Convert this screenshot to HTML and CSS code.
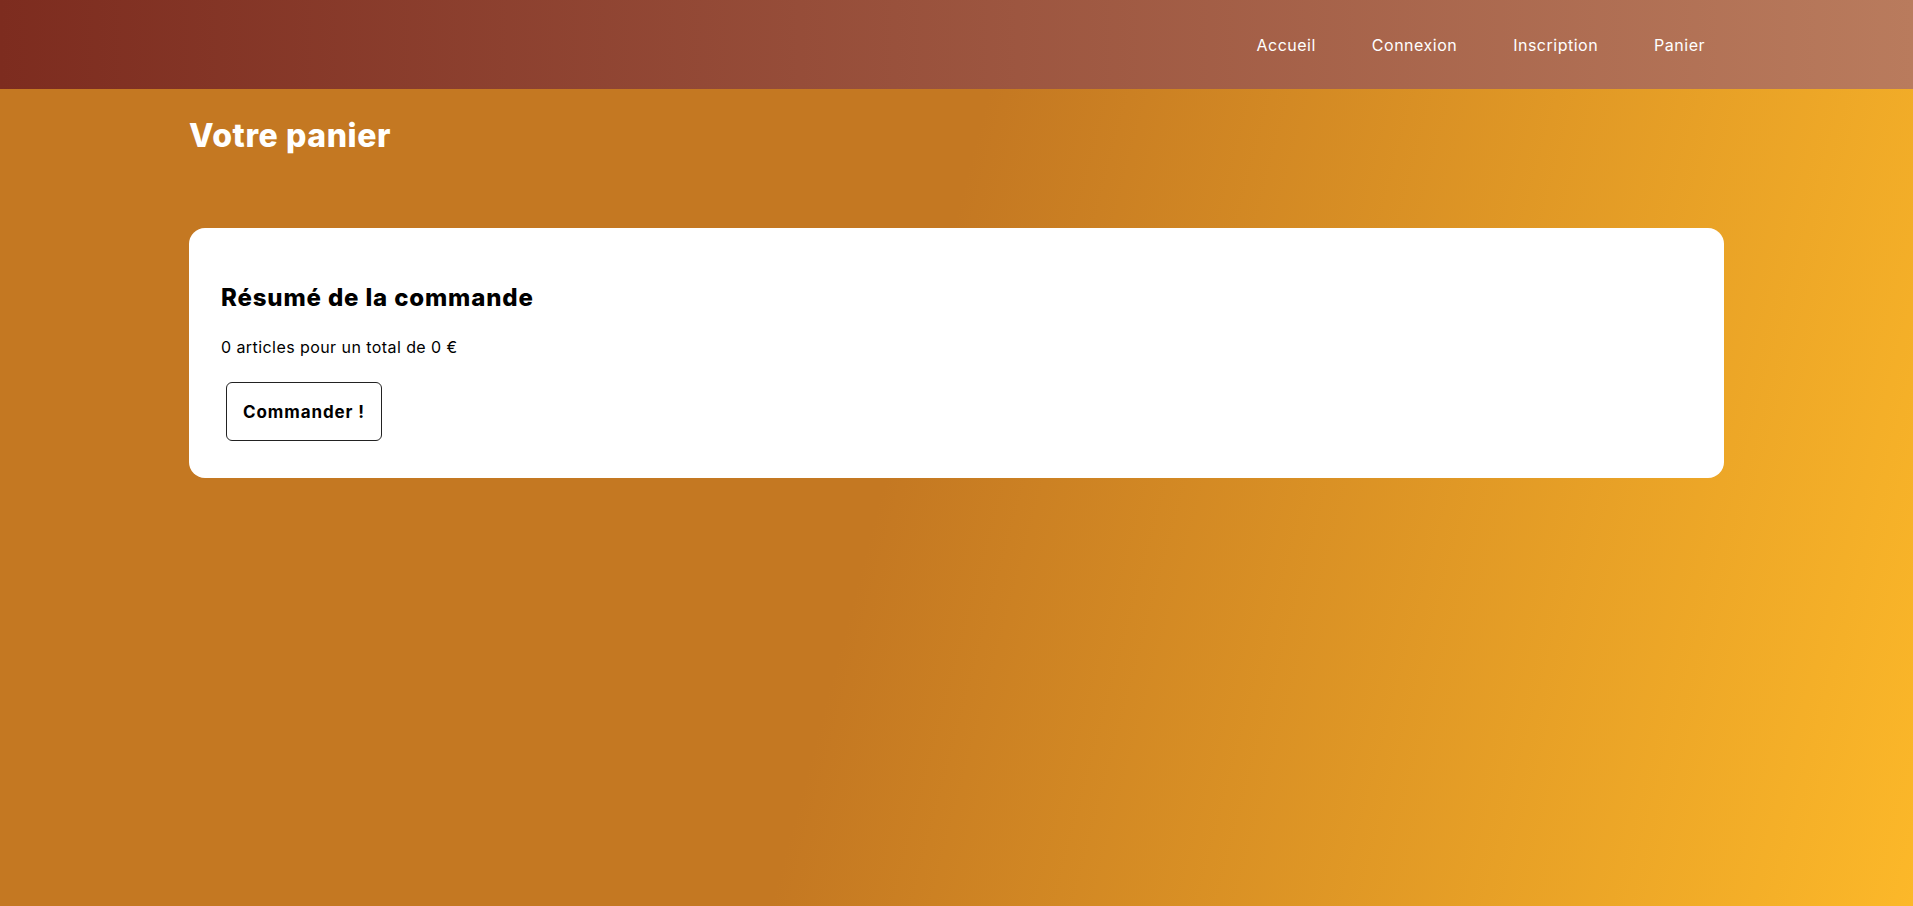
FILE: index.html
```html
<!DOCTYPE html>
<html lang="fr">
<head>
<meta charset="utf-8">
<title>Votre panier</title>
<link rel="stylesheet" href="styles.css">
</head>
<body>
<header class="topbar">
  <nav class="nav">
    <a class="nav-link" href="#">Accueil</a>
    <a class="nav-link" href="#">Connexion</a>
    <a class="nav-link" href="#">Inscription</a>
    <a class="nav-link" href="#">Panier</a>
  </nav>
</header>
<main class="page">
  <h1 class="page-title">Votre panier</h1>
  <section class="card">
    <h2 class="card-title">Résumé de la commande</h2>
    <p class="summary">0 articles pour un total de 0 €</p>
    <button class="order-btn" type="button">Commander !</button>
  </section>
</main>
</body>
</html>
```

FILE: styles.css
```css
html, body {
  margin: 0;
  padding: 0;
}

body {
  min-height: 906px;
  font-family: Inter, "DejaVu Sans", sans-serif;
  background: linear-gradient(105deg, #c47822 0%, #c47822 47%, #fcb829 100%);
  color: #000;
}

.topbar {
  height: 89px;
  background: linear-gradient(to right, #7d2c1f, #b97b5d);
  display: flex;
  align-items: center;
  justify-content: flex-end;
  padding-right: 180px;
}

.nav {
  display: flex;
  align-items: center;
}

.nav-link {
  color: #fff;
  text-decoration: none;
  font-size: 16px;
  line-height: 24px;
  letter-spacing: 0.5px;
  padding: 0 28px;
}

.page {
  width: 1535px;
  margin: 0 auto;
  display: flex;
  flex-direction: column;
}

.page-title {
  margin: 27px 0 0 0;
  font-size: 32px;
  line-height: 40px;
  font-weight: 800;
  letter-spacing: 0.6px;
  color: #fff;
}

.card {
  margin-top: 72px;
  background: #fff;
  border-radius: 16px;
  padding: 55px 32px 37px 32px;
  display: flex;
  flex-direction: column;
  align-items: flex-start;
}

.card-title {
  margin: 0;
  font-size: 24px;
  line-height: 30px;
  font-weight: 800;
  letter-spacing: 0.85px;
  color: #000;
}

.summary {
  margin: 22px 0 0 0;
  font-size: 16px;
  line-height: 24px;
  letter-spacing: 0.43px;
}

.order-btn {
  margin: 23px 0 0 5px;
  height: 59px;
  padding: 0 16px;
  font-family: Inter, "DejaVu Sans", sans-serif;
  font-size: 17px;
  font-weight: 700;
  letter-spacing: 0.9px;
  color: #000;
  background: #fff;
  border: 1px solid #222;
  border-radius: 6px;
  cursor: pointer;
}
```
